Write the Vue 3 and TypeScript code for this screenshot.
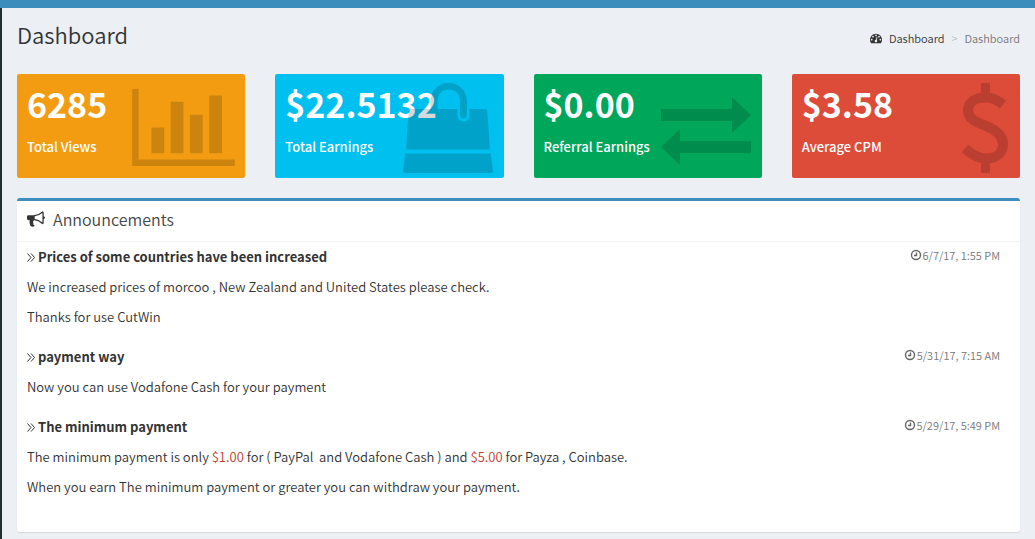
<script setup lang="ts">
interface Stat {
  value: string
  label: string
  tone: string
  icon: 'chart' | 'bag' | 'swap' | 'usd'
}
interface Piece {
  text: string
  money?: boolean
}
interface Announcement {
  title: string
  date: string
  paragraphs: Piece[][]
}

const stats: Stat[] = [
  { value: '6285', label: 'Total Views', tone: 'yellow', icon: 'chart' },
  { value: '$22.5132', label: 'Total Earnings', tone: 'aqua', icon: 'bag' },
  { value: '$0.00', label: 'Referral Earnings', tone: 'green', icon: 'swap' },
  { value: '$3.58', label: 'Average CPM', tone: 'red', icon: 'usd' },
]

const announcements: Announcement[] = [
  {
    title: 'Prices of some countries have been increased',
    date: '6/7/17, 1:55 PM',
    paragraphs: [
      [{ text: 'We increased prices of morcoo , New Zealand and United States please check.' }],
      [{ text: 'Thanks for use CutWin' }],
    ],
  },
  {
    title: 'payment way',
    date: '5/31/17, 7:15 AM',
    paragraphs: [[{ text: 'Now you can use Vodafone Cash for your payment' }]],
  },
  {
    title: 'The minimum payment',
    date: '5/29/17, 5:49 PM',
    paragraphs: [
      [
        { text: 'The minimum payment is only ' },
        { text: '$1.00', money: true },
        { text: ' for ( PayPal \u00a0and Vodafone Cash ) and ' },
        { text: '$5.00', money: true },
        { text: ' for Payza , Coinbase.' },
      ],
      [{ text: 'When you earn The minimum payment or greater you can withdraw your payment.' }],
    ],
  },
]
</script>

<template>
  <div class="app">
    <div class="topbar"></div>
    <div class="body">
      <aside class="sidebar"></aside>
      <main class="content">
        <header class="page-head">
          <h1>Dashboard</h1>
          <nav class="crumbs" aria-label="Breadcrumb">
            <a href="#">
              <svg class="gauge" viewBox="0 0 1792 1792" aria-hidden="true">
                <path d="M384 1152q0-53-37.500-90.500t-90.500-37.500-90.500 37.500-37.500 90.500 37.500 90.500 90.500 37.500 90.500-37.500 37.500-90.500zm192-448q0-53-37.500-90.500t-90.500-37.500-90.500 37.500-37.500 90.500 37.500 90.500 90.500 37.500 90.500-37.500 37.500-90.500zm428 481l101-382q6-26-7.500-48.500t-38.500-29.500-48 6.500-30 39.500l-101 382q-60 5-107 43.500t-63 98.500q-20 77 20 146t117 89 146-20 89-117q16-60-6-117t-72-91zm660-33q0-53-37.500-90.500t-90.500-37.500-90.500 37.500-37.500 90.500 37.500 90.500 90.500 37.500 90.500-37.500 37.500-90.500zm-640-640q0-53-37.500-90.500t-90.500-37.500-90.500 37.500-37.500 90.500 37.500 90.500 90.500 37.500 90.500-37.500 37.500-90.500zm448 192q0-53-37.500-90.500t-90.500-37.500-90.500 37.500-37.500 90.500 37.500 90.500 90.500 37.500 90.500-37.500 37.500-90.500zm320 448q0 261-141 483-19 29-54 29h-1402q-35 0-54-29-141-221-141-483 0-182 71-348t191-286 286-191 348-71 348 71 286 191 191 286 71 348z" />
              </svg>
              <span>Dashboard</span>
            </a>
            <span class="sep">&gt;</span>
            <span class="current">Dashboard</span>
          </nav>
        </header>

        <section class="stats">
          <article v-for="s in stats" :key="s.label" class="stat" :class="s.tone">
            <h2>{{ s.value }}</h2>
            <p>{{ s.label }}</p>
            <svg v-if="s.icon === 'chart'" class="art chart" viewBox="0 128 2048 1536" aria-hidden="true">
              <path d="M640 896v512h-256v-512h256zm384-512v1024h-256v-1024h256zm1024 1152v128h-2048v-1536h128v1408h1920zm-640-896v768h-256v-768h256zm384-384v1152h-256v-1152h256z" />
            </svg>
            <svg v-else-if="s.icon === 'bag'" class="art bag" viewBox="0 0 90 90" aria-hidden="true">
              <path d="M7.500 26H27.500V18.500C27.500 7.500 35.500 0 45.700 0S64 7.500 64 18.500V32A3.500 3.500 0 0 1 57 32V18.500C57 11 52.500 6.500 45.700 6.500S34.500 11 34.500 18.500V26H54.500V32.500A6 6 0 0 0 66.500 32.500V26H82.500Q84 26 84.200 27.500L87 66.500H3L5.800 27.500Q6 26 7.500 26ZM2.300 70.500H87.700L90 87.500Q90 90 87.500 90H2.500Q0 90 0 87.500Z" />
            </svg>
            <svg v-else-if="s.icon === 'swap'" class="art swap" viewBox="0 0 90 68" aria-hidden="true">
              <path d="M0 12H71V0L90 18L71 36V24H0ZM90 44H19V32L0 50L19 68V56H90Z" />
            </svg>
            <svg v-else class="art usd" viewBox="0 0 46 90" aria-hidden="true">
              <path d="M19 0h9v15h-9zM19 75h9v15h-9z" />
              <path class="curve" d="M41 21.500C36 17.500 30.500 14.500 24 14.500C13 14.500 6 19.500 6 27.500C6 36 14 39 24 43C35 47.500 41 53 41 61C41 70 34 75.500 24 75.500C15 75.500 9 71 3 65.500" />
            </svg>
          </article>
        </section>

        <section class="panel">
          <header class="panel-head">
            <svg class="horn" viewBox="0 0 1792 1792" aria-hidden="true">
              <path d="M1664 640q53 0 90.500 37.500t37.500 90.500-37.500 90.500-90.500 37.500v384q0 52-38 90t-90 38q-417-347-812-380-58 19-91 66t-31 100.500 40 92.500q-20 33-23 65.500t6 58 33.500 55 48 50 61.500 50.500q-29 58-111.500 83t-168.500 11.500-132-55.500q-7-23-29.500-87.500t-32-94.500-23-89-15-101 3.500-98.500 22-110.500h-122q-66 0-113-47t-47-113v-192q0-66 47-113t113-47h480q435 0 896-384 52 0 90 38t38 90v384zm-128 604v-954q-394 302-768 343v270q377 42 768 341z" />
            </svg>
            <h2>Announcements</h2>
          </header>
          <div class="panel-body">
            <article v-for="a in announcements" :key="a.title" class="news">
              <div class="news-head">
                <svg class="chev" viewBox="0 0 8 9" aria-hidden="true"><path d="M0.500 0.500L4 4.500L0.500 8.500M4 0.500L7.500 4.500L4 8.500" /></svg>
                <h3>{{ a.title }}</h3>
                <span class="time">
                  <svg viewBox="0 0 12 12" aria-hidden="true"><circle cx="6" cy="6" r="4.500" /><path d="M6.500 3.500V6.500H4" /></svg>
                  <time>{{ a.date }}</time>
                </span>
              </div>
              <p v-for="(p, i) in a.paragraphs" :key="i"><span v-for="(t, j) in p" :key="j" :class="{ money: t.money }">{{ t.text }}</span></p>
            </article>
          </div>
        </section>
      </main>
    </div>
  </div>
</template>

<style>
body {
  margin: 0;
  background: #ecf0f5;
}
</style>

<style scoped>
.app {
  min-height: 100vh;
  display: flex;
  flex-direction: column;
  font-family: "Noto Sans CJK SC", "Open Sans", sans-serif;
  font-size: 13px;
  font-weight: 350;
  line-height: 20px;
  color: #333;
  background: #ecf0f5;
}
h1, h2, h3, p {
  margin: 0;
}
.topbar {
  height: 8px;
  background: #3c8dbc;
}
.body {
  flex: 1;
  display: flex;
}
.sidebar {
  width: 2px;
  background: #222d32;
}
.content {
  flex: 1;
  min-width: 0;
  padding: 12px 15px 7px;
}
.page-head {
  display: flex;
  justify-content: space-between;
  align-items: flex-start;
  height: 54px;
}
.page-head h1 {
  font-size: 22px;
  font-weight: 350;
  line-height: 28px;
}
.crumbs {
  display: flex;
  align-items: center;
  height: 36px;
  font-size: 11px;
  color: #777;
}
.crumbs a {
  display: flex;
  align-items: center;
  gap: 7px;
  color: #333;
  text-decoration: none;
}
.gauge {
  width: 12px;
  height: 12px;
  fill: #333;
}
.sep {
  width: 20px;
  text-align: center;
  color: #bbb;
}
.stats {
  display: grid;
  grid-template-columns: repeat(4, 1fr);
  gap: 30px;
}
.stat {
  position: relative;
  padding: 10px;
  height: 84px;
  border-radius: 2px;
  color: #fff;
}
.stat h2 {
  font-size: 34px;
  font-weight: 700;
  line-height: 40px;
}
.stat p {
  margin-top: 13px;
  font-size: 13px;
  font-weight: 500;
}
.yellow { background: #f39c12; }
.aqua { background: #00c0ef; }
.green { background: #00a65a; }
.red { background: #dd4b39; }
.art {
  position: absolute;
  fill: #000;
  opacity: 0.15;
}
.chart {
  top: 15px;
  right: 10px;
  width: 103px;
  height: 77px;
}
.bag {
  top: 9px;
  right: 11px;
  width: 90px;
  height: 90px;
}
.usd {
  top: 9px;
  right: 12px;
  width: 46px;
  height: 90px;
}
.curve {
  fill: none;
  stroke: #000;
  stroke-width: 10;
}
.swap {
  top: 23px;
  right: 11px;
  width: 90px;
  height: 68px;
}
.panel {
  margin-top: 20px;
  background: #fff;
  border-top: 3px solid #3c8dbc;
  border-radius: 3px;
  box-shadow: 0 1px 1px rgba(0, 0, 0, 0.1);
}
.panel-head {
  display: flex;
  align-items: center;
  gap: 8px;
  padding: 0 10px 4px;
  height: 36px;
  border-bottom: 1px solid #f4f4f4;
  color: #444;
}
.panel-head h2 {
  font-size: 16px;
  font-weight: 350;
}
.horn {
  width: 18px;
  height: 18px;
  fill: #333;
}
.panel-body {
  padding: 5px 10px 15px;
}
.news {
  padding-bottom: 10px;
}
.news-head {
  display: flex;
  align-items: center;
  gap: 3px;
  margin-bottom: 10px;
  padding-right: 10px;
}
.news h3 {
  flex: 1;
  font-size: 13px;
  font-weight: 700;
}
.news p {
  margin-bottom: 10px;
}
.chev {
  width: 8px;
  height: 9px;
  fill: none;
  stroke: #333;
}
.time {
  display: flex;
  align-items: center;
  align-self: flex-start;
  gap: 1px;
  font-size: 11px;
  line-height: 16px;
  color: #777;
}
.time svg {
  width: 12px;
  height: 12px;
  fill: none;
  stroke: #666;
  stroke-width: 1.4;
}
.money {
  color: #c0392b;
}
</style>
